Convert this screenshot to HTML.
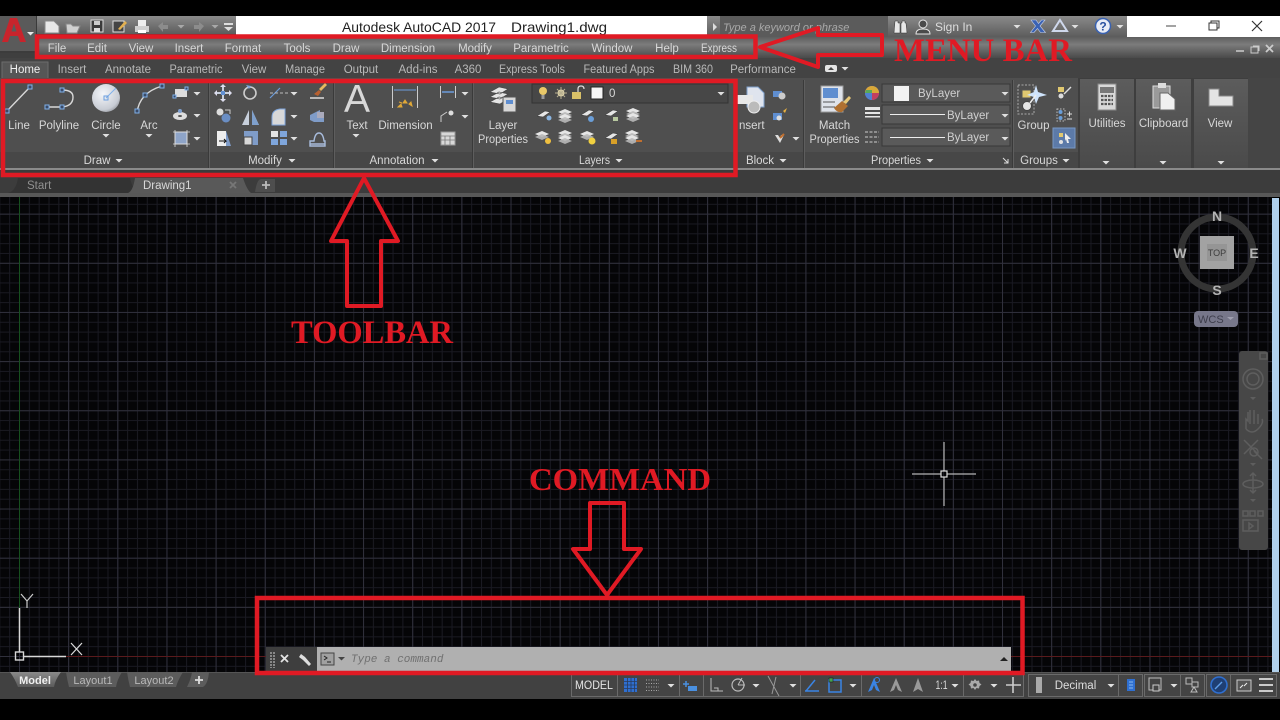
<!DOCTYPE html>
<html><head><meta charset="utf-8"><title>AutoCAD 2017 interface</title>
<style>
html,body{margin:0;padding:0;background:#000;width:1280px;height:720px;overflow:hidden}
svg{display:block;position:absolute;left:0;top:0;filter:blur(.3px)}
text{font-family:"Liberation Sans",sans-serif;font-size:11.5px;fill:#d8d8d8}
.m text{text-anchor:middle}
.dim{fill:#b8b8b8}
.r{font-family:"Liberation Serif",serif;font-weight:bold;fill:#e01a24}
.g{fill:#3a4a66;stroke:#7fb0ea;stroke-width:1}
.w{fill:none;stroke:#d8d8d8;stroke-width:1.4}
.red{fill:none;stroke:#e01a24;stroke-width:4.5}
.redt{fill:none;stroke:#e01a24;stroke-width:4;stroke-linejoin:round}
.cp{font-size:14px;font-weight:bold;fill:#b4b4b4;text-anchor:middle}
</style></head><body>
<svg width="1280" height="720" viewBox="0 0 1280 720" xmlns="http://www.w3.org/2000/svg">
<defs>
<linearGradient id="gq" x1="0" y1="0" x2="0" y2="1"><stop offset="0" stop-color="#8a8a8a"/><stop offset="1" stop-color="#5c5c5c"/></linearGradient>
<linearGradient id="gm" x1="0" y1="0" x2="0" y2="1"><stop offset="0" stop-color="#5e5e5e"/><stop offset=".35" stop-color="#7c7c7c"/><stop offset="1" stop-color="#4a4a4a"/></linearGradient>
<linearGradient id="gb" x1="0" y1="0" x2="0" y2="1"><stop offset="0" stop-color="#5c5c5c"/><stop offset="1" stop-color="#4a4a4a"/></linearGradient>
<linearGradient id="gt" x1="0" y1="0" x2="0" y2="1"><stop offset="0" stop-color="#8a8a8a"/><stop offset="1" stop-color="#5a5a5a"/></linearGradient>
<radialGradient id="gc" cx=".4" cy=".35" r=".75"><stop offset="0" stop-color="#f4f6fa"/><stop offset=".75" stop-color="#c8ccd4"/><stop offset="1" stop-color="#8a8c92"/></radialGradient>
<path id="tri" d="M-3.5 0h7l-3.500 3.500z" fill="#e0e0e0"/>
<pattern id="minor" x="19" y="656" width="9.83" height="9.83" patternUnits="userSpaceOnUse"><path d="M.5 0V9.83M0 .5H9.83" stroke="#1a1a22" stroke-width="1" fill="none"/></pattern>
<pattern id="major" x="19" y="656" width="49.15" height="49.15" patternUnits="userSpaceOnUse"><path d="M.5 0V49.15M0 .5H49.15" stroke="#30303c" stroke-width="1" fill="none"/></pattern>
<g id="lay1"><path d="M-8 -1l7-3 7 3-7 3z" fill="#e6e6e6"/><path d="M-8 2l7-3 7 3-7 3z" fill="#b8b8b8" opacity=".9"/></g>
<g id="lay2"><path d="M-6 2l8-5 5 1-7 5z" fill="#e6e6e6" stroke="#333" stroke-width=".5"/></g>
</defs>

<rect width="1280" height="720" fill="#000"/>

<!-- canvas -->
<rect x="0" y="197" width="1273" height="476" fill="#050507"/>
<rect x="0" y="197" width="1273" height="476" fill="url(#minor)"/>
<rect x="0" y="197" width="1273" height="476" fill="url(#major)"/>
<path d="M19.5 197V608" stroke="#17501f" stroke-width="1"/>
<path d="M66 656.5H1273" stroke="#5a1a1c" stroke-width="1"/>
<rect x="1272" y="198" width="7" height="475" fill="#b0d0ec"/>

<!-- title row -->
<rect x="0" y="16" width="36" height="37" fill="#5a5a5a"/>
<rect x="0" y="51" width="36" height="2" fill="#3c3c3c"/>
<path d="M2 42L10 18h7l9 24h-6l-2-6H10l-2 6zM11.500 31.500h5l-2.500-8z" fill="#c8242c"/>
<path d="M27 32h7l-3.500 3.500z" fill="#e8e8e8"/>
<rect x="36" y="16" width="200" height="21" fill="#3a3a3a"/>
<rect x="37" y="16" width="199" height="18" fill="url(#gq)"/>
<rect x="236" y="16" width="471" height="21" fill="#fff"/>
<text x="342" y="32" textLength="154" lengthAdjust="spacingAndGlyphs" style="font-size:14px;fill:#222">Autodesk AutoCAD 2017</text>
<text x="511" y="32" textLength="96" lengthAdjust="spacingAndGlyphs" style="font-size:14px;fill:#222">Drawing1.dwg</text>
<rect x="707" y="16" width="13" height="21" fill="url(#gq)"/>
<path d="M713 23l4 4-4 4z" fill="#ddd"/>
<rect x="720" y="16" width="168" height="21" fill="#5b5b5b"/>
<text x="723" y="31" style="font-size:11px;font-style:italic;fill:#a8a8a8">Type a keyword or phrase</text>
<rect x="888" y="16" width="239" height="21" fill="url(#gq)"/>
<rect x="1127" y="16" width="153" height="21" fill="#fff"/>
<!-- QAT icons -->
<path d="M45 21h9l5 5v7H45z" fill="#e8e8e8" stroke="#888"/>
<path d="M66 24h5l2 2h7l-3 7H67z" fill="#d0d0d0" stroke="#888"/>
<rect x="91" y="20" width="12" height="12" fill="#3a3a3a" stroke="#ddd"/><rect x="94" y="21" width="6" height="4" fill="#ccc"/><rect x="94" y="28" width="6" height="4" fill="#ddd"/>
<rect x="113" y="21" width="11" height="11" fill="#444" stroke="#ddd"/><path d="M118 29l7-8 2 2-7 7z" fill="#e2b050"/>
<rect x="135" y="26" width="14" height="6" fill="#d0d0d0"/><rect x="138" y="20" width="8" height="6" fill="#eee"/><rect x="138" y="30" width="8" height="3" fill="#fff"/>
<path d="M158 26l5-4v3h5v4h-5v3z" fill="#8c8c8c"/><use href="#tri" x="181" y="25" style="opacity:.5"/>
<path d="M204 26l-5-4v3h-5v4h5v3z" fill="#8c8c8c"/><use href="#tri" x="215" y="25" style="opacity:.5"/>
<rect x="224" y="23" width="9" height="2" fill="#ddd"/><path d="M224 27h9l-4.500 4z" fill="#ddd"/>
<!-- sign in cluster -->
<path d="M895 21h3v2h2v10h-6zM902 21h3v2h1l1 10h-6v-10h1z" fill="#e8e8e8" stroke="#333" stroke-width=".5"/>
<circle cx="923" cy="24" r="4" fill="#4a4a4a" stroke="#e6e6e6"/><path d="M916 34q0-5 7-5t7 5z" fill="#4a4a4a" stroke="#e6e6e6"/>
<text x="935" y="31" style="font-size:12px;fill:#dedede">Sign In</text>
<use href="#tri" x="1017" y="25"/>
<path d="M1031 20h5l2.500 3.500 3-3.500h3.500l-5 6 5.500 6.500h-5l-3-4-3.500 4h-3.500l5-6.500z" fill="#3a62b4" stroke="#c4d0ea" stroke-width=".6"/>
<path d="M1060 20l7 11h-14z" fill="none" stroke="#cfd8ec" stroke-width="2"/><use href="#tri" x="1075" y="25"/>
<circle cx="1103" cy="26" r="7.500" fill="#e8ecf6" stroke="#3a62b0" stroke-width="1.500"/><text x="1103" y="30.500" style="font-size:12px;font-weight:bold;fill:#2850a0;text-anchor:middle">?</text><use href="#tri" x="1120" y="25"/>
<path d="M1166 26h10" stroke="#666" stroke-width="1.200"/>
<rect x="1209" y="23" width="8" height="7" fill="#fff" stroke="#333"/><path d="M1211 23v-2h8v7h-2" fill="none" stroke="#333"/>
<path d="M1252 21l10 10M1262 21l-10 10" stroke="#333" stroke-width="1.200"/>

<!-- menu bar -->
<rect x="36" y="37" width="1244" height="21" fill="url(#gm)"/>
<rect x="0" y="53" width="36" height="5" fill="#3f3f3f"/>
<g class="m">
<text x="57" y="52">File</text><text x="97" y="52">Edit</text><text x="141" y="52">View</text><text x="189" y="52">Insert</text><text x="243" y="52">Format</text><text x="297" y="52">Tools</text><text x="346" y="52">Draw</text><text x="408" y="52">Dimension</text><text x="475" y="52">Modify</text><text x="541" y="52">Parametric</text><text x="612" y="52">Window</text><text x="667" y="52">Help</text><text x="719" y="52" textLength="36" lengthAdjust="spacingAndGlyphs">Express</text>
</g>
<path d="M1236 51h8" stroke="#ccc" stroke-width="1.500"/>
<rect x="1251" y="47" width="7" height="6" fill="none" stroke="#ccc"/><path d="M1253 46h6v5" fill="none" stroke="#ccc"/>
<path d="M1266 45l7 7M1273 45l-7 7" stroke="#ccc" stroke-width="1.800"/>

<!-- ribbon tabs -->
<rect x="0" y="58" width="1280" height="20" fill="#434343"/>
<path d="M2 78V62h46v16" fill="#565656" stroke="#6c6c6c"/>
<g class="m">
<text x="25" y="73" style="fill:#f0f0f0">Home</text>
<text x="72" y="73" class="dim">Insert</text><text x="128" y="73" class="dim">Annotate</text><text x="196" y="73" class="dim" textLength="53" lengthAdjust="spacingAndGlyphs">Parametric</text><text x="254" y="73" class="dim">View</text><text x="305" y="73" class="dim" textLength="40" lengthAdjust="spacingAndGlyphs">Manage</text><text x="361" y="73" class="dim">Output</text><text x="418" y="73" class="dim">Add-ins</text><text x="468" y="73" class="dim">A360</text><text x="532" y="73" class="dim" textLength="66" lengthAdjust="spacingAndGlyphs">Express Tools</text><text x="619" y="73" class="dim" textLength="71" lengthAdjust="spacingAndGlyphs">Featured Apps</text><text x="693" y="73" class="dim" textLength="40" lengthAdjust="spacingAndGlyphs">BIM 360</text><text x="763" y="73" class="dim">Performance</text>
</g>
<rect x="825" y="65" width="12" height="7" rx="2" fill="#e4e4e4"/><path d="M828 70h6l-3-3z" fill="#444"/><use href="#tri" x="845" y="67"/>

<!-- ribbon -->
<rect x="0" y="78" width="1280" height="92" fill="#4f4f4f"/>
<rect x="0" y="152" width="1078" height="16" fill="#474747"/>
<rect x="0" y="168" width="1280" height="2" fill="#8a8a8a"/>
<rect x="1078" y="78" width="170" height="90" fill="#3e3e3e"/>
<rect x="1248" y="78" width="32" height="90" fill="#454545"/>
<rect x="1080" y="79" width="54" height="89" fill="url(#gb)"/>
<rect x="1136" y="79" width="55" height="89" fill="url(#gb)"/>
<rect x="1194" y="79" width="54" height="89" fill="url(#gb)"/>
<path d="M208.500 80V168M333.500 80V168M472.500 80V168M803.500 80V168M1012.500 80V168" stroke="#3a3a3a" stroke-width="1"/>
<path d="M209.500 80V168M334.500 80V168M473.500 80V168M804.500 80V168M1013.500 80V168" stroke="#5e5e5e" stroke-width="1"/>

<!-- Draw -->
<path d="M7 111L30 87" class="w"/><rect x="5" y="109" width="4" height="4" class="g"/><rect x="28" y="85" width="4" height="4" class="g"/>
<path d="M47 107H62Q73 106 73 97 73 90 62 90" class="w"/><rect x="45" y="105" width="4" height="4" class="g"/><rect x="60" y="105" width="4" height="4" class="g"/><rect x="60" y="88" width="4" height="4" class="g"/>
<circle cx="106" cy="98" r="14" fill="url(#gc)"/><path d="M106 98l10-10" stroke="#7fb0ea"/><rect x="104" y="96" width="4" height="4" fill="none" stroke="#6a9ee0"/>
<path d="M137 113Q139 93 162 86" class="w"/><rect x="135" y="109" width="4" height="4" class="g"/><rect x="143" y="93" width="4" height="4" class="g"/><rect x="160" y="84" width="4" height="4" class="g"/>
<rect x="175" y="89" width="12" height="8" fill="#ddd"/><rect x="173" y="95" width="3" height="3" class="g"/><rect x="185" y="87" width="3" height="3" class="g"/><use href="#tri" x="197" y="92"/>
<ellipse cx="180" cy="116" rx="7" ry="4" fill="#ddd"/><circle cx="180" cy="111" r="2" fill="#7fa0d0"/><ellipse cx="180" cy="116" rx="2" ry="1" fill="#555"/><use href="#tri" x="197" y="114"/>
<rect x="175" y="132" width="12" height="12" fill="#8ea4c8" stroke="#ddd"/><path d="M173 132h17M173 144h17M175 130v17M187 130v17" stroke="#ddd" stroke-width=".8"/><use href="#tri" x="197" y="137"/>
<g class="m"><text x="19" y="129">Line</text><text x="59" y="129">Polyline</text><text x="106" y="129">Circle</text><text x="149" y="129">Arc</text><text x="97" y="164">Draw</text></g>
<use href="#tri" x="106" y="134"/><use href="#tri" x="149" y="134"/><use href="#tri" x="119" y="159"/>

<!-- Modify -->
<path d="M223 86v14M216 93h14" stroke="#c8d0dc" stroke-width="2"/><path d="M223 84l3 3h-6zM223 102l3-3h-6zM214 93l3-3v6zM232 93l-3-3v6z" fill="#dde"/><rect x="221" y="91" width="4" height="4" fill="#5f8ed0"/>
<circle cx="250" cy="93" r="6" fill="none" stroke="#ccc" stroke-width="1.600"/><path d="M246 85l5 1-2 3z" fill="#7fa6dc"/>
<path d="M270 98L280 88" stroke="#6c9cdc" stroke-width="1.200"/><path d="M270 93h18" stroke="#bbb" stroke-dasharray="3 2"/><use href="#tri" x="294" y="92"/>
<path d="M319 89l6-6 2 2-6 6z" fill="#e6b860"/><path d="M314 94l5-4 2 2-3 4z" fill="#b86030"/><path d="M310 98h14" stroke="#ddd" stroke-width="1.500"/>
<circle cx="220" cy="112" r="3.500" fill="#ddd"/><circle cx="226" cy="118" r="4.500" fill="#6a8ec4"/><path d="M225 110h5v4" fill="none" stroke="#ccc"/>
<path d="M249 110v15h-7zM252 110v15h7z" fill="#c8d0dc"/><path d="M252 110v15h7z" fill="#7fa0cc"/>
<path d="M272 125v-8q0-7 8-8h5v16z" fill="#d8d8d8" stroke="#7fa6dc"/><use href="#tri" x="294" y="115"/>
<path d="M310 115l10-5v5l-10 5zM320 113h4v9h-10l-4-2" fill="#7f9cc8"/><rect x="317" y="112" width="7" height="6" fill="#aab"/>
<path d="M217 131h9l5 15h-14z" fill="#7f9cc8"/><rect x="217" y="131" width="9" height="15" fill="#eee"/><path d="M219 141h7l-2-2m2 2l-2 2" stroke="#111" fill="none"/>
<rect x="244" y="131" width="14" height="14" fill="#7f9cc8"/><rect x="244" y="137" width="8" height="8" fill="#d8d8d8" stroke="#444"/>
<rect x="271" y="131" width="7" height="6" fill="#e4e4e4"/><rect x="280" y="131" width="7" height="6" fill="#7fa6dc"/><rect x="271" y="139" width="7" height="6" fill="#7fa6dc"/><rect x="280" y="139" width="7" height="6" fill="#7fa6dc"/><use href="#tri" x="294" y="137"/>
<path d="M310 146v-5h4q1-8 5-8t5 8h1v5zM310 144h15" fill="none" stroke="#a8bcdc" stroke-width="1.400"/>
<text x="265" y="164" style="text-anchor:middle">Modify</text><use href="#tri" x="292" y="159"/>

<!-- Annotation -->
<text x="357" y="112" style="font-size:39px;text-anchor:middle;fill:#d8d8d8">A</text>
<text x="357" y="129" style="text-anchor:middle">Text</text><use href="#tri" x="356" y="134"/>
<path d="M392.500 86v22M417.500 86v22" stroke="#ccc"/><path d="M394 90h22" stroke="#6c9cdc"/>
<path d="M398 107l3-3 1 3zM403 103l2-3 2 3zM409 104l2-2 1 4zM399 102l3 1" fill="#e0a838" stroke="#e0a838"/>
<text x="405.500" y="129" style="text-anchor:middle">Dimension</text>
<path d="M440.500 86v12M455.500 86v12" stroke="#ccc"/><path d="M442 92h12" stroke="#6c9cdc" stroke-width="1.500"/><use href="#tri" x="465" y="92"/>
<path d="M441 122v-6l6-4" fill="none" stroke="#ccc"/><circle cx="451" cy="113" r="2.500" fill="#ddd"/><use href="#tri" x="465" y="115"/>
<rect x="441" y="132" width="14" height="13" fill="#d8d8d8" stroke="#999"/><path d="M441 136h14M441 140h14M445 136v9M450 136v9" stroke="#777" stroke-width=".8"/>
<text x="397" y="164" style="text-anchor:middle">Annotation</text><use href="#tri" x="435" y="159"/>

<!-- Layers -->
<path d="M490 92l9-5 9 2-8 5zM490 97l9-5 9 2-8 5zM490 102l9-5 9 2-8 5z" fill="#e4e4e4" stroke="#444" stroke-width=".6"/>
<rect x="503" y="97" width="13" height="15" fill="#d8d8d8" stroke="#555"/><rect x="506" y="100" width="7" height="4" fill="#5f8ed0"/>
<text x="503" y="129" style="text-anchor:middle">Layer</text><text x="503" y="143" style="text-anchor:middle" textLength="50" lengthAdjust="spacingAndGlyphs">Properties</text><text x="594.500" y="164" style="text-anchor:middle" textLength="31" lengthAdjust="spacingAndGlyphs">Layers</text>
<use href="#tri" x="619" y="159"/>
<rect x="532" y="84" width="196" height="19" fill="#474747" stroke="#333"/>
<circle cx="543" cy="91" r="4" fill="#e8c868"/><rect x="541.500" y="95" width="3" height="4" fill="#999"/>
<circle cx="561" cy="93" r="3.500" fill="#e8dcb0"/><path d="M561 87v12M555 93h12M557 89l8 8M565 89l-8 8" stroke="#b8b090" stroke-width="1"/>
<rect x="572" y="92" width="9" height="7" fill="#d8c068"/><path d="M578 92v-3q0-3 3-3t3 3" fill="none" stroke="#ddd" stroke-width="1.200"/>
<rect x="591" y="87" width="12" height="12" fill="#f4f4f4" stroke="#222"/>
<text x="609" y="97" style="fill:#d8d8d8">0</text>
<use href="#tri" x="721" y="92"/>
<g>
<use href="#lay2" x="543" y="114"/><circle cx="549" cy="118" r="2.500" fill="#8ab4e0"/>
<use href="#lay1" x="566" y="113"/><use href="#lay1" x="566" y="118"/>
<use href="#lay2" x="587" y="113"/><circle cx="591" cy="119" r="3" fill="#6a9ed8"/>
<use href="#lay2" x="611" y="113"/><rect x="613" y="117" width="5" height="4" fill="#b8c8a0"/>
<use href="#lay1" x="634" y="112"/><use href="#lay1" x="634" y="117"/>
<use href="#lay1" x="543" y="135"/><circle cx="548" cy="141" r="3" fill="#f0c040"/>
<use href="#lay1" x="566" y="134"/><use href="#lay1" x="566" y="139"/>
<use href="#lay1" x="588" y="135"/><circle cx="592" cy="141" r="3.500" fill="#f0d040"/>
<use href="#lay2" x="611" y="136"/><rect x="611" y="139" width="6" height="5" fill="#d8a028"/>
<use href="#lay1" x="633" y="134"/><use href="#lay1" x="633" y="139"/><rect x="636" y="140" width="6" height="2" fill="#c07030"/>
</g>

<!-- Block -->
<path d="M747 87h11l6 6v14h-17z" fill="#dfe4ee" stroke="#7fa0cc"/><rect x="737" y="95" width="16" height="9" fill="#e8e8e8"/><circle cx="754" cy="107" r="6" fill="#bbb" stroke="#eee"/>
<text x="739" y="129" style="fill:#d8d8d8">nsert</text>
<rect x="773" y="91" width="9" height="6" fill="#5f8ed0"/><circle cx="782" cy="96" r="3.500" fill="#ccc"/>
<rect x="773" y="113" width="9" height="7" fill="#5f8ed0"/><circle cx="779" cy="118" r="2.500" fill="#ddd"/><path d="M783 111l4-3-2 5z" fill="#e8b040"/>
<path d="M775 135l5 8 4-8h-3l-1 3-2-3z" fill="#ddd"/><path d="M780 138l4-4" stroke="#c07030" stroke-width="2"/><use href="#tri" x="796" y="137"/>
<text x="760" y="164" style="text-anchor:middle">Block</text><use href="#tri" x="783" y="159"/>

<!-- Match Properties -->
<rect x="821" y="86" width="22" height="26" fill="#dfe3ea" stroke="#999"/><rect x="823" y="88" width="15" height="10" fill="#5f8ed0"/><path d="M823 102h12M823 107h12" stroke="#555"/>
<path d="M834 108l8-7 6 5-6 6q-5 1-8-4z" fill="#b07030"/><path d="M843 102l6-6 2 2-5 6z" fill="#e8c878"/>
<text x="834.500" y="129" style="text-anchor:middle">Match</text><text x="834.500" y="143" style="text-anchor:middle" textLength="50" lengthAdjust="spacingAndGlyphs">Properties</text>

<!-- Properties -->
<circle cx="872" cy="93" r="7" fill="#8a6cc0"/><path d="M872 86a7 7 0 0 1 7 7h-14a7 7 0 0 1 7-7z" fill="#d8a838"/><path d="M865 93a7 7 0 0 0 7 7v-7z" fill="#5080d0"/><path d="M879 93a7 7 0 0 1-7 7v-7z" fill="#c04060"/><path d="M866 90h6v3h-7z" fill="#58a858"/>
<path d="M865 107h15v3h-15zM865 112h15v2h-15zM865 116h15v1.500h-15z" fill="#e6e6e6"/>
<path d="M865 132h14M865 137h14M865 142h14" stroke="#ccc" stroke-dasharray="3 1.500"/>
<rect x="882" y="84" width="128" height="18" fill="#5a5a5a" stroke="#383838"/>
<rect x="894" y="86" width="15" height="15" fill="#f2f2f2"/><text x="918" y="97" style="fill:#d0d0d0">ByLayer</text><use href="#tri" x="1005" y="92"/>
<rect x="882" y="105" width="128" height="19" fill="#5a5a5a" stroke="#383838"/>
<path d="M890 114.500h55" stroke="#eee"/><text x="947" y="119" style="fill:#d0d0d0">ByLayer</text><use href="#tri" x="1005" y="114"/>
<rect x="882" y="128" width="128" height="18" fill="#5a5a5a" stroke="#383838"/>
<path d="M890 137.500h55" stroke="#eee"/><text x="947" y="141" style="fill:#d0d0d0">ByLayer</text><use href="#tri" x="1005" y="137"/>
<text x="896" y="164" style="text-anchor:middle" textLength="50" lengthAdjust="spacingAndGlyphs">Properties</text><use href="#tri" x="930" y="159"/>
<path d="M1003 158l5 5M1008 159v4h-4" fill="none" stroke="#ddd"/>

<!-- Groups -->
<rect x="1018" y="85" width="16" height="29" fill="none" stroke="#aaa" stroke-dasharray="2 1.500"/>
<rect x="1022" y="90" width="9" height="8" fill="#e0c870" stroke="#555"/><circle cx="1027" cy="106" r="4.500" fill="#e4e4e4" stroke="#444"/>
<path d="M1036 85l2 7 9 3-8 2-3 7-2-7-7-2 7-3z" fill="#cfe4fc"/><path d="M1030 103l6-8" stroke="#eee" stroke-width="1.500"/>
<text x="1033.500" y="129" style="text-anchor:middle">Group</text>
<rect x="1058" y="87" width="6" height="5" fill="#e0c870"/><circle cx="1061" cy="96" r="2.500" fill="#ddd"/><path d="M1064 94l7-7" stroke="#ddd" stroke-width="1.400"/>
<rect x="1057" y="109" width="8" height="12" fill="none" stroke="#bbb" stroke-dasharray="1.500 1.500"/><circle cx="1060.500" cy="112" r="2" fill="#6a9ed8"/><circle cx="1060.500" cy="118" r="2" fill="#6a9ed8"/><path d="M1067 114h5M1069.500 111.500v5M1067 119h5" stroke="#ddd"/>
<rect x="1053" y="128" width="22" height="20" fill="#5c7aa8" stroke="#7898c4"/><rect x="1059" y="133" width="4" height="4" fill="#e0c870"/><circle cx="1061" cy="142" r="2" fill="#e0e0e0"/><path d="M1065 133l6 6-3 0 1 4-2 0-1-4-1 2z" fill="#eee"/>
<text x="1039" y="164" style="text-anchor:middle">Groups</text><use href="#tri" x="1066" y="159"/>

<!-- Utilities/Clipboard/View -->
<rect x="1098" y="84" width="18" height="26" fill="#d8d8d8" stroke="#888"/><rect x="1100" y="87" width="14" height="6" fill="#777"/>
<path d="M1101 96h12M1101 100h12M1101 104h12" stroke="#555" stroke-width="2.200" stroke-dasharray="2.500 1"/>
<text x="1107" y="127" style="text-anchor:middle">Utilities</text><use href="#tri" x="1106" y="161"/>
<rect x="1153" y="86" width="17" height="22" fill="#9a9a9a" stroke="#ddd"/><rect x="1158" y="83" width="8" height="5" fill="#ddd"/>
<path d="M1160 93h8l7 6v11h-15z" fill="#f0f0f0" stroke="#666"/>
<text x="1163.500" y="127" style="text-anchor:middle">Clipboard</text><use href="#tri" x="1163" y="161"/>
<path d="M1209 89h10v7h14v10h-24z" fill="#e4e4e4" stroke="#888"/>
<text x="1220" y="127" style="text-anchor:middle">View</text><use href="#tri" x="1221" y="161"/>

<!-- file tabs -->
<rect x="0" y="170" width="1280" height="27" fill="#3c3c3c"/>
<rect x="0" y="193" width="1280" height="4" fill="#585858"/>
<path d="M8 193q8-2 10-15h112q3 12 8 15z" fill="#333"/>
<path d="M128 193q5-2 7-15h108q4 12 8 15z" fill="#595959"/>
<text x="27" y="189" style="fill:#909090">Start</text>
<text x="143" y="189" style="fill:#d8d8d8">Drawing1</text>
<path d="M230 182l6 6M236 182l-6 6" stroke="#777" stroke-width="1.800"/>
<path d="M255 192q2-13 6-13h14v13z" fill="#4e4e4e"/>
<path d="M262 185h8M266 181v8" stroke="#bbb" stroke-width="1.800"/>

<!-- UCS -->
<path d="M19.500 608V652M24 656.500H66" stroke="#d8d8d8" stroke-width="1.500"/>
<rect x="15.500" y="652" width="8" height="8" fill="none" stroke="#d8d8d8" stroke-width="1.400"/>
<path d="M21 594l6 7 6-7M27 601v7" fill="none" stroke="#ccc" stroke-width="1.200"/>
<path d="M71 643l11 12M82 643l-11 12" stroke="#ddd" stroke-width="1.200"/>

<!-- crosshair -->
<path d="M912 474H941M947 474H976M944 442V471M944 477V506" stroke="#b4b4b4" stroke-width="1.200"/>
<rect x="941" y="471" width="6" height="6" fill="none" stroke="#ddd" stroke-width="1.200"/>

<!-- viewcube -->
<circle cx="1217" cy="253" r="36" fill="none" stroke="#343434" stroke-width="7"/>
<rect x="1200" y="236" width="34" height="33" fill="#a2a2a2"/>
<rect x="1207" y="244" width="20" height="17" fill="#959595"/>
<text x="1217" y="256" style="font-size:9px;text-anchor:middle;fill:#3c3c3c">TOP</text>
<text x="1217" y="221" class="cp">N</text><text x="1217" y="295" class="cp">S</text><text x="1254" y="258" class="cp">E</text><text x="1180" y="258" class="cp">W</text>
<rect x="1194" y="311" width="44" height="16" rx="4" fill="#77778a"/>
<text x="1198" y="323" style="font-size:11px;fill:#3e3e4c">WCS</text><path d="M1227 317h7l-3.500 3z" fill="#a0a0b0"/>

<!-- nav bar -->
<rect x="1239" y="351" width="29" height="199" rx="3" fill="#474747"/>
<g fill="none" stroke="#5e5e5e" stroke-width="1.500">
<rect x="1260" y="353" width="7" height="6"/>
<circle cx="1253" cy="379" r="10"/><circle cx="1253" cy="379" r="6"/>
<path d="M1246 429v-10l2 2v-9M1250 424v-14M1254 424v-14M1258 424v-10M1246 429q6 6 12 0t4-10"/>
<path d="M1244 440l14 14M1258 440l-14 14M1254 451l8 8"/>
<circle cx="1254" cy="452" r="4"/>
<path d="M1253 473v20M1250 476l3-3 3 3M1250 490l3 3 3-3"/><ellipse cx="1253" cy="484" rx="10" ry="4"/>
<rect x="1243" y="511" width="5" height="5"/><rect x="1250" y="511" width="5" height="5"/><rect x="1258" y="511" width="5" height="5"/>
<rect x="1243" y="520" width="15" height="11"/><path d="M1249 523l4 3-4 3z"/>
</g>
<path d="M1250 397h6l-3 3zM1250 463h6l-3 3zM1250 499h6l-3 3z" fill="#5e5e5e"/>

<!-- command line -->
<rect x="266" y="647" width="51" height="24" fill="#3e3e3e"/>
<rect x="317" y="647" width="694" height="24" fill="#b0b0b0"/>
<path d="M271 652v16M274 652v16" stroke="#888" stroke-width="2" stroke-dasharray="2 1"/>
<path d="M281 655l7 7M288 655l-7 7" stroke="#e4e4e4" stroke-width="1.800"/>
<path d="M301 654l4 3 6 7-2 2-6-6-4-3z" fill="#ddd"/>
<rect x="321" y="653" width="13" height="12" fill="#a0a0a0" stroke="#444"/><path d="M324 656l3 2-3 2M327 662h4" fill="none" stroke="#222"/>
<path d="M338 657h7l-3.500 3.500z" fill="#444"/>
<text x="351" y="662" style="font-family:'Liberation Mono',monospace;font-style:italic;font-size:11px;fill:#707070">Type a command</text>
<path d="M1000 661h8l-4-4z" fill="#222"/>

<!-- status bar -->
<rect x="0" y="672" width="1280" height="27" fill="#414141"/>
<rect x="0" y="672" width="1280" height="1" fill="#555"/>
<path d="M10 672h51q-6 8-7 15H18q-3-8-8-15z" fill="url(#gt)"/>
<path d="M66 672h56q-5 8-6 15H69q-2-8-3-15z" fill="#5c5c5c"/>
<path d="M127 672h56q-5 8-7 15H130q-2-8-3-15z" fill="#5c5c5c"/>
<path d="M192 672h17q-1 12-6 15h-16q4-8 5-15z" fill="#5c5c5c"/>
<text x="35" y="684" style="text-anchor:middle;font-weight:bold;font-size:11px;fill:#f0f0f0">Model</text>
<text x="93" y="684" style="text-anchor:middle;font-size:11px;fill:#b8b8b8">Layout1</text>
<text x="154" y="684" style="text-anchor:middle;font-size:11px;fill:#b8b8b8">Layout2</text>
<path d="M195 680h8M199 676v8" stroke="#ddd" stroke-width="1.800"/>
<g fill="#444" stroke="#6a6a6a">
<rect x="571.500" y="674.500" width="46" height="22"/><rect x="617.500" y="674.500" width="62" height="22"/><rect x="679.500" y="674.500" width="24" height="22"/><rect x="703.500" y="674.500" width="97" height="22"/><rect x="800.500" y="674.500" width="61" height="22"/><rect x="861.500" y="674.500" width="102" height="22"/><rect x="963.500" y="674.500" width="60" height="22"/><rect x="1028.500" y="674.500" width="90" height="22"/><rect x="1118.500" y="674.500" width="24" height="22"/><rect x="1144.500" y="674.500" width="36" height="22"/><rect x="1180.500" y="674.500" width="24" height="22"/><rect x="1206.500" y="674.500" width="24" height="22"/><rect x="1230.500" y="674.500" width="46" height="22"/>
</g>
<text x="594" y="689" style="font-size:12px;text-anchor:middle;fill:#e4e4e4" textLength="38" lengthAdjust="spacingAndGlyphs">MODEL</text>
<rect x="624" y="678" width="13" height="14" fill="#2f6fd0"/><path d="M627.500 678v14M631 678v14M634.500 678v14M624 681.500h13M624 685h13M624 688.500h13" stroke="#2a3c5c" stroke-width=".8"/>
<path d="M646 680h13M646 683.500h13M646 687h13M646 690.500h13" stroke="#aaa" stroke-width="1" stroke-dasharray="1 1.500"/>
<use href="#tri" x="671" y="684"/>
<path d="M683 684h6M686 681v6" stroke="#4a90e0" stroke-width="1.500"/><rect x="688" y="686" width="9" height="5" fill="#4a90e0"/>
<path d="M711 678v13h12M714 688h4v3" fill="none" stroke="#bbb"/>
<circle cx="738" cy="685" r="6" fill="none" stroke="#bbb" stroke-width="1.200"/><path d="M738 685h7M738 685l4-7" stroke="#bbb"/><use href="#tri" x="756" y="684"/>
<path d="M768 676l11 20M776 677l-4 17" stroke="#999"/><use href="#tri" x="793" y="684"/>
<path d="M805 691h14M806 691l9-11" stroke="#3a84e4" stroke-width="1.500"/>
<rect x="829" y="680" width="12" height="12" fill="none" stroke="#3a84e4" stroke-width="1.500"/><rect x="829" y="678" width="4" height="4" fill="#46a050" stroke="#111" stroke-width=".5"/><use href="#tri" x="853" y="684"/>
<path d="M874 678l-6 14 4-2 2-5 2 5 4 2z" fill="#3a84e4"/><circle cx="877" cy="680" r="2.500" fill="none" stroke="#3a84e4"/>
<path d="M896 678l-6 14 4-2 2-5 2 5 4 2z" fill="#999"/>
<path d="M918 678l-5 14 5-3 5 3z" fill="#999"/>
<text x="941.500" y="689" style="font-size:12px;text-anchor:middle;fill:#ddd" textLength="12" lengthAdjust="spacingAndGlyphs">1:1</text><use href="#tri" x="955" y="684"/>
<path d="M975 679l1.500 2 2.500-.5.500 2.500 2 1.500-2 1.500-.5 2.500-2.500-.5-1.500 2-1.500-2-2.500.5-.5-2.500-2-1.500 2-1.500.5-2.500 2.500.5z" fill="#aaa"/><circle cx="975" cy="685" r="1.800" fill="#444"/><use href="#tri" x="994" y="684"/>
<path d="M1013 677v16M1006 685h15" stroke="#ccc" stroke-width="1.600"/>
<rect x="1036" y="677" width="6" height="16" fill="#aaa"/>
<text x="1075.500" y="689" style="font-size:11.500px;text-anchor:middle;fill:#dedede">Decimal</text><use href="#tri" x="1111" y="684"/>
<rect x="1127" y="679" width="8" height="12" fill="#2f6fd0"/><path d="M1129 682h4M1129 685h4M1129 688h4" stroke="#8ab8ee"/>
<rect x="1149" y="678" width="12" height="12" fill="none" stroke="#bbb"/><rect x="1153" y="685" width="6" height="6" fill="#444" stroke="#ccc"/><use href="#tri" x="1174" y="684"/>
<rect x="1186" y="678" width="6" height="6" fill="none" stroke="#bbb"/><rect x="1192" y="682" width="6" height="5" fill="none" stroke="#bbb"/><path d="M1191 692l3-5 3 5z" fill="none" stroke="#bbb"/>
<circle cx="1219" cy="685" r="8" fill="#1f3f74" stroke="#2f6fd0" stroke-width="1.600"/><path d="M1215 689l7-7" stroke="#5f9ee8" stroke-width="1.400"/>
<rect x="1237" y="680" width="14" height="11" fill="#555" stroke="#ccc"/><path d="M1240 688l3-3M1247 683l-3 3" stroke="#eee"/>
<path d="M1259 679h14M1259 685h14M1259 691h14" stroke="#ddd" stroke-width="1.800"/>

<!-- red annotations -->
<rect x="37" y="36.500" width="718.500" height="20.500" class="red"/>
<rect x="3" y="81" width="732.500" height="94" class="red"/>
<rect x="257" y="598" width="765.500" height="75" class="red"/>
<path d="M760 47L818 28V35H882V55H818V67Z" class="redt"/>
<path d="M364 178L398 241H381V306H347V241H331Z" class="redt"/>
<path d="M590 503H624V549H641L607 595L573 549H590Z" class="redt"/>
<text x="894" y="61" textLength="178" lengthAdjust="spacingAndGlyphs" class="r" style="font-size:33px">MENU BAR</text>
<text x="291" y="343" textLength="162" lengthAdjust="spacingAndGlyphs" class="r" style="font-size:33px">TOOLBAR</text>
<text x="529" y="490" textLength="182" lengthAdjust="spacingAndGlyphs" class="r" style="font-size:32px">COMMAND</text>
</svg>
</body></html>
